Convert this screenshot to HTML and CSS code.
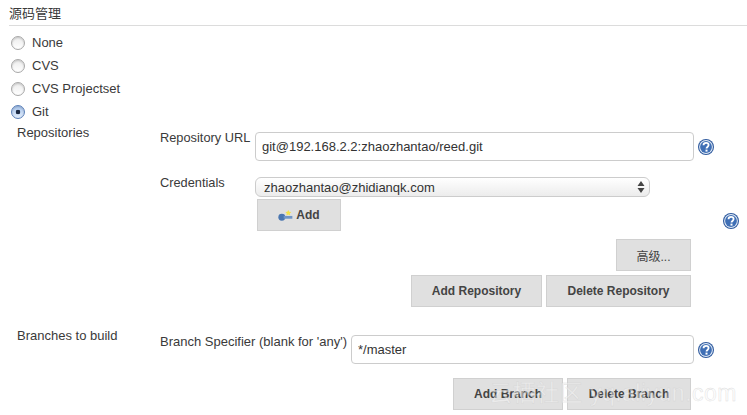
FILE: index.html
```html
<!DOCTYPE html>
<html>

<head>
    <title>源码管理</title>
    <meta charset="utf-8">
    <link rel="stylesheet" href="styles.css">
</head>
<body>
    <svg class="icon-defs" width="0" height="0">
        <symbol id="help" viewBox="0 0 16 16">
            <circle cx="8" cy="8" r="8" fill="#2f5a9e"/>
            <circle cx="8" cy="8" r="6.900" fill="#e4ecf6"/>
            <circle cx="8" cy="8" r="5.900" fill="#3f6fb5"/>
            <path d="M5.500 6.300c0-1.500 1.100-2.400 2.600-2.400s2.500.9 2.500 2.200c0 1.900-2.100 1.900-2.100 3.500" fill="none" stroke="#fff" stroke-width="1.800"/>
            <rect x="7.500" y="10.600" width="2" height="2" fill="#fff"/>
        </symbol>
    </svg>

    <div class="section">
        <h3 class="section-title">源码管理</h3>

        <label class="radio-row"><input type="radio" name="scm"> None</label>
        <label class="radio-row"><input type="radio" name="scm"> CVS</label>
        <label class="radio-row"><input type="radio" name="scm"> CVS Projectset</label>
        <label class="radio-row"><input type="radio" name="scm" checked> Git</label>

        <div class="block block-repos">
            <div class="block-label">Repositories</div>
            <div class="block-body">
                <div class="field field-url">
                    <label class="field-label label-short">Repository URL</label>
                    <input class="text-input url-input" type="text" value="git@192.168.2.2:zhaozhantao/reed.git">
                    <svg class="help"><use href="#help"/></svg>
                </div>
                <div class="field field-cred">
                    <label class="field-label label-short">Credentials</label>
                    <div class="select-wrap">
                        <select class="cred-select">
                            <option>zhaozhantao@zhidianqk.com</option>
                        </select>
                        <svg class="select-arrows" viewBox="0 0 8 12"><path d="M4 0l3.500 5h-7zM4 12L.5 7h7z" fill="#444"/></svg>
                    </div>
                </div>
                <div class="add-row">
                    <button class="btn btn-add">
                        <svg class="key" viewBox="0 0 16 12">
                            <path d="M11 0l1.100 2 2.200.3-1.600 1.500.4 2.200-2.100-1.100-2 1.100.4-2.200-1.600-1.500 2.200-.3z" fill="#f4e34a"/>
                            <circle cx="4" cy="8" r="3.800" fill="#4a76b0"/>
                            <rect x="6" y="6.500" width="9.500" height="3" fill="#6f95c6"/>
                        </svg>
                        Add
                    </button>
                    <svg class="help help-outer"><use href="#help"/></svg>
                </div>
                <div class="btn-row btn-row-advanced">
                    <button class="btn btn-advanced">高级...</button>
                </div>
                <div class="btn-row btn-row-repo">
                    <button class="btn btn-add-repo">Add Repository</button>
                    <button class="btn btn-del-repo">Delete Repository</button>
                </div>
            </div>
        </div>

        <div class="block block-branches">
            <div class="block-label">Branches to build</div>
            <div class="block-body">
                <div class="field">
                    <label class="field-label label-long">Branch Specifier (blank for 'any')</label>
                    <input class="text-input branch-input" type="text" value="*/master">
                    <svg class="help"><use href="#help"/></svg>
                </div>
                <div class="btn-row btn-row-branch">
                    <button class="btn btn-add-branch">Add Branch</button>
                    <button class="btn btn-del-branch">Delete Branch</button>
                </div>
            </div>
        </div>
    </div>

    <div class="watermark">云栖社区 yq.aliyun.com</div>
</body>

</html>
```

FILE: styles.css
```css
html, body {
    height: 100%;
}

body {
    margin: 0;
    padding: 0;
    overflow: hidden;
    position: relative;
    background-color: #ffffff;
    color: #3a3a3a;
    font-family: "Liberation Sans", "Noto Sans CJK SC", Arial, sans-serif;
    font-size: 13px;
}

.icon-defs {
    position: absolute;
}

.section {
    padding-left: 9px;
}

.section-title {
    margin: 0 0 5px 0;
    height: 25px;
    line-height: 28px;
    border-bottom: 1px solid #dcdcdc;
    font-size: 13px;
    font-weight: normal;
}

.radio-row {
    display: flex;
    align-items: center;
    gap: 7px;
    height: 23px;
    padding-left: 2px;
}

.radio-row input {
    appearance: none;
    width: 14px;
    height: 14px;
    margin: 0;
    border: 1px solid #a8a8a8;
    border-radius: 50%;
    background: linear-gradient(#ececec, #ffffff);
    box-shadow: inset 0 1px 2px rgba(0, 0, 0, 0.18);
}

.radio-row input:checked {
    border-color: #5a7fb8;
    background: radial-gradient(circle, #1c2a44 0, #1c2a44 2px, transparent 2.6px), linear-gradient(#a9c6ee, #e2edfb);
}

.block {
    display: flex;
}

.block-label {
    width: 151px;
    padding-left: 8px;
    box-sizing: border-box;
    flex-shrink: 0;
}

.block-repos {
    margin-top: 1px;
}

.block-repos .block-label {
    line-height: 17px;
}

.block-body {
    flex: 1;
}

.field {
    display: flex;
    align-items: flex-start;
}

.field-label {
    flex-shrink: 0;
    font-size: 12.8px;
}

.label-short {
    width: 95px;
}

.field-url {
    padding-top: 8px;
}

.field-url .field-label {
    line-height: 11px;
}

.field-cred {
    margin-top: 16px;
}

.field-cred .field-label {
    line-height: 11px;
}

.label-long {
    width: 191px;
    font-size: 13px;
}

.text-input {
    height: 29px;
    box-sizing: border-box;
    padding: 0 6px;
    border: 1px solid #cccccc;
    border-radius: 4px;
    background-color: #ffffff;
    color: #333333;
    font-family: inherit;
    font-size: 13px;
    outline: none;
}

.url-input {
    width: 439px;
}

.branch-input {
    width: 343px;
}

.help {
    width: 16px;
    height: 16px;
    margin: 7px 0 0 4px;
    flex-shrink: 0;
}

.select-wrap {
    position: relative;
    width: 395px;
}

.cred-select {
    appearance: none;
    display: block;
    width: 100%;
    height: 20px;
    box-sizing: border-box;
    padding: 0 8px;
    border: 1px solid #cccccc;
    border-radius: 6px;
    background: linear-gradient(#ffffff, #ececec);
    color: #333333;
    font-family: inherit;
    font-size: 13px;
    outline: none;
}

.select-arrows {
    position: absolute;
    right: 5px;
    top: 4px;
    width: 8px;
    height: 12px;
}

.btn {
    height: 32px;
    box-sizing: border-box;
    padding: 0;
    border: 1px solid #d0d0d0;
    border-radius: 0;
    background-color: #e0e0e0;
    color: #444444;
    font-family: inherit;
    font-size: 12px;
    font-weight: bold;
}

.add-row {
    display: flex;
    margin-top: 2px;
    padding-left: 97px;
}

.btn-add {
    width: 84px;
    display: flex;
    align-items: center;
    justify-content: center;
    gap: 3px;
}

.key {
    width: 15px;
    height: 11px;
}

.help-outer {
    margin: 14px 0 0 382px;
}

.btn-row {
    display: flex;
    justify-content: flex-end;
    gap: 4px;
    width: 531px;
}

.btn-row-advanced {
    margin-top: 8px;
}

.btn-advanced {
    width: 75px;
    font-weight: normal;
}

.btn-row-repo {
    margin-top: 4px;
}

.btn-add-repo {
    width: 131px;
}

.btn-del-repo {
    width: 145px;
}

.block-branches {
    margin-top: 28px;
}

.block-branches .field-label {
    line-height: 13px;
}

.block-branches .block-label {
    margin-top: -6px;
    line-height: 13px;
}

.btn-row-branch {
    margin-top: 14px;
}

.btn-add-branch {
    width: 110px;
}

.btn-del-branch {
    width: 124px;
}

.watermark {
    position: absolute;
    left: 489px;
    top: 374px;
    color: rgba(250, 250, 250, 0.45);
    -webkit-text-stroke: 0.4px rgba(205, 205, 205, 0.7);
    font-size: 23px;
    letter-spacing: 0.5px;
    white-space: nowrap;
}
```
